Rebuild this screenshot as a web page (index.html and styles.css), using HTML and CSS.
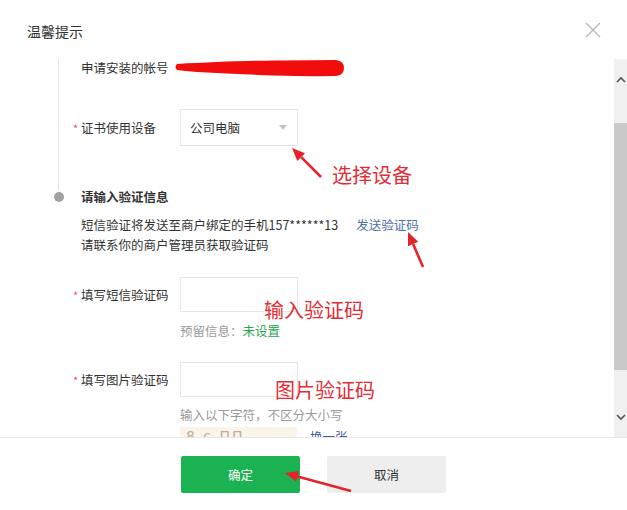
FILE: index.html
```html
<!DOCTYPE html>
<html lang="zh-CN">
<head>
<meta charset="utf-8">
<title>温馨提示</title>
<link rel="stylesheet" href="styles.css">
</head>
<body>
<div class="dialog">
  <header class="dlg-head">
    <h1 class="dlg-title">温馨提示</h1>
    <button class="close" aria-label="关闭">
      <svg width="16" height="16" viewBox="0 0 16 16"><path d="M1 1 L15 15 M15 1 L1 15" stroke="#b8b8b8" stroke-width="1.4" fill="none"/></svg>
    </button>
  </header>

  <div class="dlg-body">
    <div class="content">
      <section class="step step-done">
        <div class="row-account">
          <span class="label-plain">申请安装的帐号</span>
          <svg class="scribble" width="170" height="18" viewBox="0 0 170 18"><path d="M2 5 Q 12 4 22 4 Q 60 2 100 1.5 Q 140 1 161 1 Q 169 2 169 9 Q 169 16 161 17 Q 130 17.5 100 16.5 Q 60 15 22 13 Q 10 12 2 11 Q -1 8 2 5 Z" fill="#f20d0d"/></svg>
        </div>
        <div class="field-row field-row-select">
          <span class="label req">证书使用设备</span>
          <div class="select"><span>公司电脑</span><i class="caret"></i></div>
        </div>
      </section>

      <section class="step step-active">
        <h2 class="step-title">请输入验证信息</h2>
        <p class="desc">
          <span class="desc-line">短信验证将发送至商户绑定的手机157******13<a class="link send-link">发送验证码</a></span>
          <span class="desc-line">请联系你的商户管理员获取验证码</span>
        </p>
        <div class="field-row">
          <span class="label req">填写短信验证码</span>
          <div class="input"></div>
        </div>
        <p class="hint">预留信息：<span class="ok">未设置</span></p>
        <div class="field-row">
          <span class="label req">填写图片验证码</span>
          <div class="input"></div>
        </div>
        <p class="hint hint-tight">输入以下字符，不区分大小写</p>
        <div class="captcha-row">
          <div class="captcha"><span class="captcha-txt">8 c ΠΠ</span></div>
          <a class="link swap-link">换一张</a>
        </div>
      </section>
    </div>
    <div class="scrollbar">
      <div class="sb-btn"><svg width="10" height="7" viewBox="0 0 10 7"><path d="M1 6 L5 2 L9 6" stroke="#555" stroke-width="1.6" fill="none"/></svg></div>
      <div class="sb-gap"></div>
      <div class="sb-thumb"></div>
      <div class="sb-fill"></div>
      <div class="sb-btn"><svg width="10" height="7" viewBox="0 0 10 7"><path d="M1 1 L5 5 L9 1" stroke="#555" stroke-width="1.6" fill="none"/></svg></div>
    </div>
  </div>

  <footer class="dlg-foot">
    <button class="btn btn-primary">确定</button>
    <button class="btn btn-default">取消</button>
  </footer>

  <div class="annot-layer">
    <svg class="annot-arrows" width="627" height="510" viewBox="0 0 627 510">
      <g stroke="#e4232b" stroke-width="2.6" fill="none">
        <line x1="321" y1="177" x2="301.2" y2="157.2"/>
        <line x1="423" y1="267" x2="413.1" y2="244"/>
        <line x1="351" y1="491" x2="297.5" y2="476.4"/>
      </g>
      <g fill="#e4232b">
        <polygon points="292,148 305.1,153.3 297.3,161.1"/>
        <polygon points="408,232 418.2,241.8 408,246.2"/>
        <polygon points="285,473 298.9,471.1 296.1,481.7"/>
      </g>
    </svg>
    <span class="annot-text a1">选择设备</span>
    <span class="annot-text a2">输入验证码</span>
    <span class="annot-text a3">图片验证码</span>
  </div>
</div>
</body>
</html>
```

FILE: styles.css
```css
* { box-sizing: border-box; margin: 0; padding: 0; }
html, body { width: 627px; height: 510px; overflow: hidden; background: #fff; }
body {
  font-family: "Noto Sans CJK SC", "Noto Sans", sans-serif;
  font-size: 12.5px;
  color: #333;
}

.dialog {
  position: relative;
  width: 627px;
  height: 510px;
  display: flex;
  flex-direction: column;
  background: #fff;
}

/* header */
.dlg-head {
  height: 59px;
  flex: none;
  display: flex;
  align-items: center;
  justify-content: space-between;
  padding: 0 26px 0 27px;
}
.dlg-title {
  font-size: 14px;
  font-weight: normal;
  line-height: 20px;
  color: #333;
  margin-top: 3px;
}
.close {
  width: 16px;
  height: 16px;
  border: 0;
  background: none;
  display: block;
}
.close svg { display: block; }

/* body */
.dlg-body {
  height: 379px;
  flex: none;
  display: flex;
  border-bottom: 1px solid #e8e8e8;
}
.content {
  flex: 1;
  overflow: hidden;
}

.step-done {
  margin-left: 58px;
  border-left: 1px solid #e4e4e4;
  padding-left: 22px;
  padding-bottom: 44px;
}
.row-account {
  height: 18px;
  display: flex;
  align-items: center;
  line-height: 18px;
}
.scribble { display: block; flex: none; margin-left: 6px; }

.field-row {
  display: flex;
  align-items: center;
  margin-top: 22px;
}
.field-row-select { margin-top: 32px; }
.label {
  width: 99px;
  flex: none;
  line-height: 18px;
}
.req::before {
  content: "*";
  display: inline-block;
  width: 8px;
  margin-left: -8px;
  color: #e8545a;
  font-size: 11px;
}
.select {
  width: 118px;
  height: 37px;
  border: 1px solid #e6e6e6;
  display: flex;
  align-items: center;
  justify-content: space-between;
  padding: 0 10px 0 9px;
}
.caret {
  width: 0;
  height: 0;
  border-left: 4.5px solid transparent;
  border-right: 4.5px solid transparent;
  border-top: 5px solid #c2c2c2;
}
.input {
  width: 118px;
  height: 35px;
  border: 1px solid #e6e6e6;
}

.step-active {
  position: relative;
  padding-left: 81px;
}
.step-active::before {
  content: "";
  position: absolute;
  left: 54px;
  top: 2px;
  width: 10px;
  height: 10px;
  border-radius: 50%;
  background: #a2a2a2;
}
.step-title {
  font-size: 12.5px;
  font-weight: bold;
  line-height: 14px;
  color: #333;
}
.desc { margin-top: 11px; }
.desc-line { display: block; line-height: 20px; }
.link { color: #4f6fa8; text-decoration: none; }
.send-link { margin-left: 18px; }

.hint {
  margin: 10px 0 0 99px;
  line-height: 18px;
  color: #9a9a9a;
}
.hint-tight { margin-top: 9px; }
.ok { color: #1fa64e; }

.captcha-row {
  margin: 3px 0 0 99px;
  display: flex;
  align-items: flex-start;
}
.captcha {
  width: 117px;
  height: 30px;
  background: #faf4ea;
  padding: 1px 0 0 6px;
  line-height: 16px;
}
.captcha-txt {
  font-family: "DejaVu Sans", sans-serif;
  font-size: 14px;
  color: #bfae9c;
  letter-spacing: 2px;
}
.swap-link {
  margin-left: 13px;
  line-height: 20px;
  color: #3e5d96;
}

/* fake scrollbar */
.scrollbar {
  width: 13px;
  flex: none;
  background: #f0f0f0;
  display: flex;
  flex-direction: column;
}
.sb-btn {
  height: 40px;
  flex: none;
  display: flex;
  align-items: center;
  justify-content: center;
}
.sb-btn svg { display: block; }
.sb-gap { height: 24px; flex: none; }
.sb-thumb { height: 247px; flex: none; background: #c9c9c9; }
.sb-fill { flex: 1; }

/* footer */
.dlg-foot {
  flex: 1;
  display: flex;
  justify-content: center;
  gap: 27px;
  padding-top: 18px;
}
.btn {
  width: 119px;
  height: 37px;
  border: 0;
  border-radius: 2px;
  font-family: inherit;
  font-size: 12.5px;
}
.btn-primary { background: #1bb251; color: #fff; }
.btn-default { background: #eeeeee; color: #333; }

/* annotations drawn over the screenshot */
.annot-layer {
  position: absolute;
  inset: 0;
  pointer-events: none;
}
.annot-arrows { position: absolute; left: 0; top: 0; }
.annot-text {
  position: absolute;
  font-size: 20px;
  line-height: 20px;
  color: #e12d36;
  white-space: nowrap;
}
.a1 { left: 332px; top: 165px; }
.a2 { left: 264px; top: 300px; }
.a3 { left: 275px; top: 380px; }
```
